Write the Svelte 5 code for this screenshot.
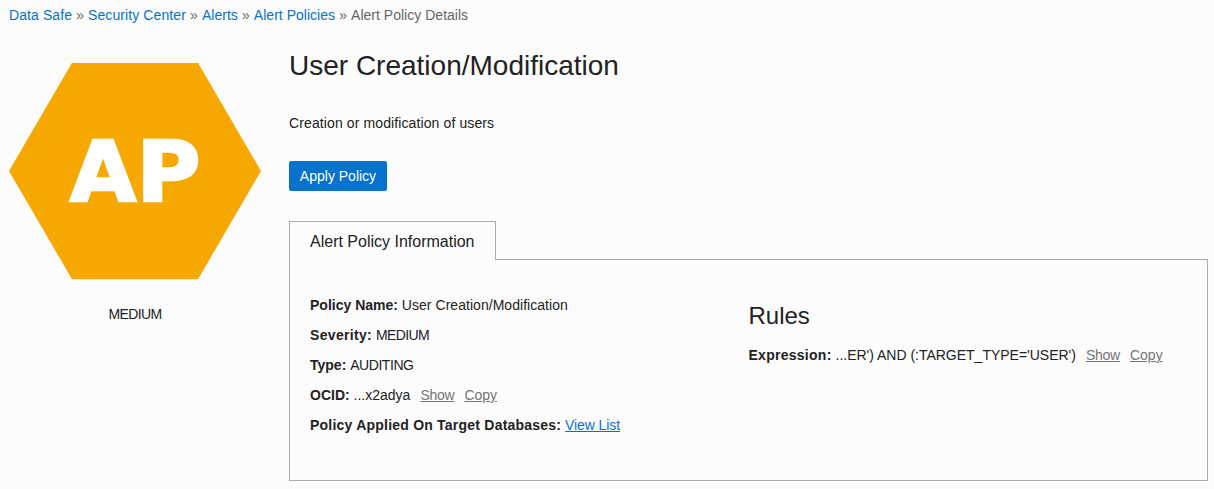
<script>
  const crumbs = [
    { label: 'Data Safe', tracking: 0.09 },
    { label: 'Security Center', tracking: 0.09 },
    { label: 'Alerts', tracking: 0.03 },
    { label: 'Alert Policies', tracking: 0.02 }
  ];
</script>

<div class="page">
  <nav>
    {#each crumbs as c}<a href="#top" style:letter-spacing="{c.tracking}px">{c.label}</a><span class="sep">»</span>{/each}<span class="current">Alert Policy Details</span>
  </nav>
  <div class="layout">
    <aside>
      <svg width="252" height="217" viewBox="0 0 252 217">
        <polygon points="0,108 63,-0.2 189,-0.2 252,108 189,216.2 63,216.2" fill="#f7a800" />
        <text x="61" y="138" textLength="66" lengthAdjust="spacingAndGlyphs">A</text>
        <text x="127.5" y="138" textLength="64" lengthAdjust="spacingAndGlyphs">P</text>
      </svg>
      <div class="level"><span class="medium">MEDIUM</span></div>
    </aside>
    <main>
      <h1>User Creation/Modification</h1>
      <p>Creation or modification of users</p>
      <button>Apply Policy</button>
      <div class="tab">Alert Policy Information</div>
      <section class="panel">
        <div class="info">
          <div><b>Policy Name:</b> <span class="name">User Creation/Modification</span></div>
          <div><b class="severity">Severity:</b> <span class="medium">MEDIUM</span></div>
          <div><b>Type:</b> <span class="type">AUDITING</span></div>
          <div><b>OCID:</b> ...x2adya<a class="grey show" href="#top">Show</a><a class="grey" href="#top">Copy</a></div>
          <div><b class="applied">Policy Applied On Target Databases:</b> <a class="view" href="#top">View List</a></div>
        </div>
        <div class="rules">
          <h2>Rules</h2>
          <div><b class="expression">Expression:</b> <span class="value">...ER') AND (:TARGET_TYPE='USER')</span><a class="grey show" href="#top">Show</a><a class="grey" href="#top">Copy</a></div>
        </div>
      </section>
    </main>
  </div>
</div>

<style>
  :global(body) { background: #fcfcfc; }
  .page { box-sizing: border-box; height: 489px; overflow: hidden; padding: 5px 6px 0 9px; font: 14px/20px "Liberation Sans", Arial, sans-serif; color: #222; }
  nav { display: flex; height: 20px; white-space: nowrap; }
  a { color: #0572ce; text-decoration: none; }
  .sep { margin: 0 4.1px; color: #666; }
  .current { color: #666; letter-spacing: .02px; }
  .layout { display: flex; }
  aside { width: 280px; padding-top: 38px; flex: none; }
  svg { display: block; }
  svg text { font: bold 83px "DejaVu Sans", sans-serif; fill: #fff; stroke: #fff; stroke-width: 2.6px; }
  .level { width: 252px; text-align: center; margin-top: 24px; }
  .medium { letter-spacing: -.65px; }
  main { flex: 1; padding-top: 21px; }
  h1 { font-size: 28px; line-height: 40px; font-weight: 400; margin: 0; }
  p { margin: 27px 0 0; letter-spacing: .11px; }
  button { display: block; margin: 28px 0 0; width: 98px; height: 30px; border: 0; border-radius: 2px; padding: 0; background: #0572ce; color: #fff; font: inherit; }
  .tab { position: relative; box-sizing: border-box; width: 207px; height: 39px; margin-top: 30px; border: 1px solid #aaa; border-bottom: 0; background: #fcfcfc; font-size: 16px; line-height: 40px; padding-left: 20px; z-index: 1; white-space: nowrap; }
  .panel { box-sizing: border-box; height: 222px; margin-top: -1px; border: 1px solid #aaa; display: flex; padding: 30px 20px 0; line-height: 30px; white-space: nowrap; }
  .info { width: 438.5px; flex: none; }
  .name { letter-spacing: .04px; }
  .severity { letter-spacing: .33px; }
  .type { letter-spacing: -.45px; }
  .applied { letter-spacing: .22px; }
  .expression { letter-spacing: .27px; }
  .value { letter-spacing: -.01px; }
  h2 { margin: 11px 0 9px; font-size: 24px; line-height: 30px; font-weight: 400; }
  .grey { color: #757575; text-decoration: underline; margin-left: 10px; }
  .show { letter-spacing: -.25px; }
  .view { text-decoration: underline; letter-spacing: -.1px; }
</style>
